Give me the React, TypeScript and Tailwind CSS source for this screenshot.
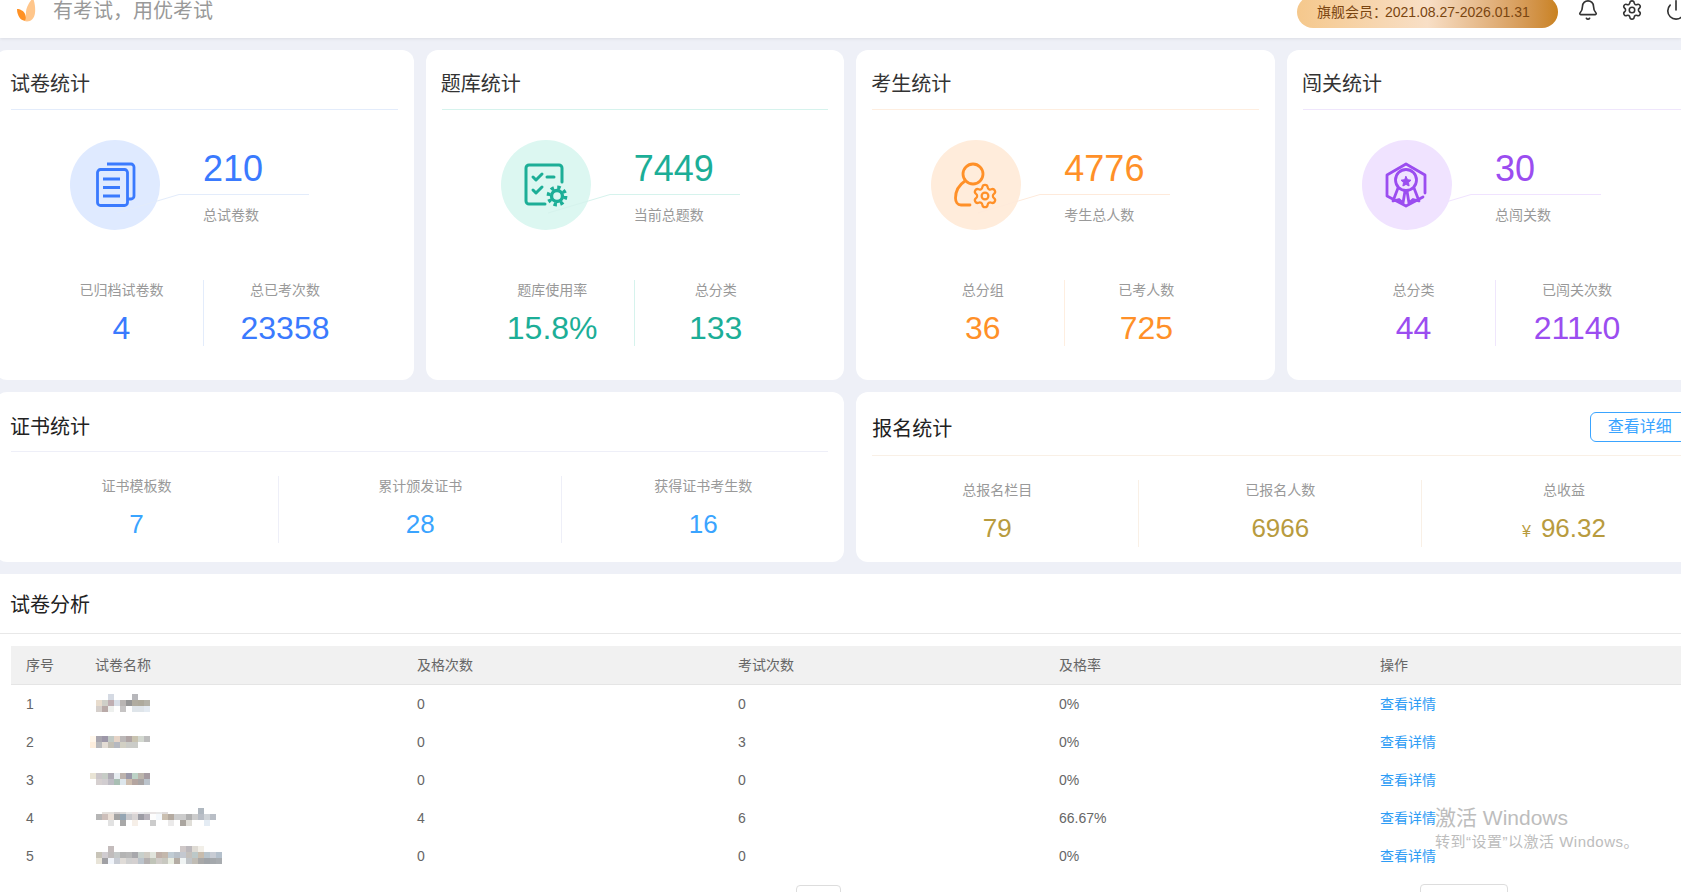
import { ReactNode } from 'react';
import { Bell, Settings, Power } from 'lucide-react';

const font = "font-['Liberation_Sans','Noto_Sans_CJK_SC',sans-serif]";

function DocIcon() {
  return (
    <svg width="90" height="90" viewBox="0 0 90 90" fill="none" stroke="#3a7afe" strokeWidth="2.8" strokeLinejoin="round">
      <path d="M37 24H61a3 3 0 0 1 3 3V56a3 3 0 0 1-3 3H58" />
      <rect x="27.5" y="29.5" width="30" height="36" rx="3" />
      <path d="M33 39H50M33 47.5H50M33 56H50" />
    </svg>
  );
}

function CheckGearIcon() {
  return (
    <svg width="90" height="90" viewBox="0 0 90 90" fill="none" stroke="#1cae97" strokeWidth="3" strokeLinecap="round" strokeLinejoin="round">
      <path d="M44 64H28a3 3 0 0 1-3-3V28a3 3 0 0 1 3-3H58a3 3 0 0 1 3 3V42" />
      <path d="M32 37l3 3 6-6M32 50l3 3 6-6M46 37H53" />
      <circle cx="56" cy="56" r="5.5" strokeWidth="3.4" />
      <circle cx="56" cy="56" r="8.6" strokeWidth="3.6" strokeLinecap="butt" strokeDasharray="3.4 3.35" />
    </svg>
  );
}

function PersonGearIcon() {
  return (
    <svg width="90" height="90" viewBox="0 0 90 90" fill="none" stroke="#ff9028" strokeWidth="2.8" strokeLinecap="round" strokeLinejoin="round">
      <circle cx="42" cy="34" r="10" />
      <path d="M34 41C28 45 24.500 51 24.500 58C24.500 62 26.500 65 30 65H39" />
      <Settings x="40.500" y="42.500" width="27" height="27" strokeWidth="2" color="#ff9028" />
    </svg>
  );
}

function MedalIcon() {
  return (
    <svg width="90" height="90" viewBox="0 0 90 90" fill="none" stroke="#9b4df0" strokeWidth="2.8" strokeLinecap="round" strokeLinejoin="round">
      <path d="M63 53V35L44 24L25 35V56L44 66L61 57" />
      <circle cx="44" cy="40" r="10.500" />
      <path d="M36 48L31 61L37 59.500L41 63L43 51M52 48L57 61L51 59.500L47 63L45 51" />
      <path d="M44 36.500l1.600 3.200 3.400.500-2.500 2.400.600 3.400-3.100-1.600-3.100 1.600.600-3.400-2.500-2.400 3.400-.500z" fill="#9b4df0" strokeWidth="1" />
    </svg>
  );
}

function Logo() {
  return (
    <svg width="22" height="22" viewBox="0 0 22 22">
      <path d="M18 -2C20 3 20.500 9 20 13C19.500 18 16 21.500 12 21.500C10 21.500 8 20.500 7 19C10 19 11 16 11 12C11 8 14 2 18 -2Z" fill="#ffc68b" />
      <path d="M2 9C5 9 9 11 10 14C11 17 11 19 10 20.500C6 21 2 16 2 9Z" fill="#ff9124" />
    </svg>
  );
}

interface StatCardProps {
  title: string;
  icon: ReactNode;
  total: string;
  totalLabel: string;
  left: [string, string];
  right: [string, string];
  textClass: string;
  circleClass: string;
  lineClass: string;
  lineColor: string;
}

function StatCard({ title, icon, total, totalLabel, left, right, textClass, circleClass, lineClass, lineColor }: StatCardProps) {
  return (
    <div className="h-[330px] rounded-xl bg-white px-4">
      <div className={`h-[60px] border-b pt-[21px] text-xl leading-[26px] text-[#333] ${lineClass}`}>
        <div className="-ml-px">{title}</div>
      </div>
      <div className="relative mt-[30px] ml-[59px] flex h-[90px]">
        <div className={`flex size-[90px] items-center justify-center rounded-full ${circleClass}`}>{icon}</div>
        <div className="ml-[43px] flex flex-col gap-[18px] pt-[11px]">
          <div className={`text-4xl leading-[36px] ${textClass}`}>{total}</div>
          <div className="text-sm leading-5 text-[#999]">{totalLabel}</div>
        </div>
        <svg className="absolute top-0 left-0" width="240" height="90" fill="none" stroke={lineColor}>
          <path d="M47 73L109 54.500H239" />
        </svg>
      </div>
      <div className="mt-[50px] ml-[29px] grid w-[326px] grid-cols-2 text-center">
        <div>
          <div className="text-sm leading-5 text-[#999]">{left[0]}</div>
          <div className={`mt-[10px] text-[32px] leading-9 ${textClass}`}>{left[1]}</div>
        </div>
        <div className={`border-l ${lineClass}`}>
          <div className="text-sm leading-5 text-[#999]">{right[0]}</div>
          <div className={`mt-[10px] text-[32px] leading-9 ${textClass}`}>{right[1]}</div>
        </div>
      </div>
    </div>
  );
}

const certStats = [
  ['证书模板数', '7'],
  ['累计颁发证书', '28'],
  ['获得证书考生数', '16'],
];

const signupStats = [
  ['总报名栏目', '79'],
  ['已报名人数', '6966'],
  ['总收益', '96.32'],
];

function StatColumns({ stats, textClass, lineClass, colsClass }: { stats: string[][]; textClass: string; lineClass: string; colsClass: string }) {
  return (
    <div className={`-mx-4 mt-6 grid text-center ${colsClass}`}>
      {stats.map(([label, value], idx) => (
        <div key={label} className={`h-[67px] ${idx > 0 ? `border-l ${lineClass}` : ''}`}>
          <div className="text-sm leading-5 text-[#999]">{label}</div>
          <div className={`mt-[10px] text-[26px] leading-9 ${textClass}`}>
            {label === '总收益' && <span className="mr-2.5 text-base">¥</span>}
            {value}
          </div>
        </div>
      ))}
    </div>
  );
}

// blurred exam names in the picture: [x, y, colours per 6px cell]
const mosaics: [number, number, string[]][][] = [
  [
    [42, 0, ['#b7b7bb']],
    [18, 0, ['#d5dae3']],
    [6, 6, ['#e8dccd', '#cfcfc8', '#bfaeb2', '#d9dfe8', '#b9b5b3', '#969696', '#b0aca0', '#aeaa9c', '#b4b2a8']],
    [6, 12, ['#d5cfcb', '#b9aaa8', '#eef0ee', '#ffffff', '#c6c4c4', '#ffffff', '#dfe5ea', '#dfe5ea', '#e4ebf2']],
  ],
  [
    [0, 4, ['#fff7ec', '#a8a5ae', '#9d97a8', '#c1c9c5', '#e6d4c7', '#bcb8b8', '#b0a4a4', '#c9c3b0', '#d3d8d0', '#bdbdbd']],
    [0, 10, ['#fdeedd', '#b9b9bb', '#e3dcd4', '#c3bfb4', '#b5b8c0', '#d2d0c4', '#cbccc8', '#cbccc8']],
  ],
  [
    [0, 3, ['#e9e4d5', '#cbc6c9', '#c6ccc6', '#aeaab4', '#e6ecf0', '#bdb3ad', '#9a98a8', '#bcd2c6', '#bcb5ac', '#a69ca2']],
    [0, 9, ['#ffffff', '#d6d0d0', '#d1cdd0', '#bebcc4', '#a9bfb4', '#dde6ec', '#cdbdae', '#b4a5a0', '#a8a4a4', '#bcc4cc']],
  ],
  [
    [108, 0, ['#b0b8c0']],
    [12, 4, ['#e4e0dc', '#e4e0dc', '#d4d0d0', '#d8d8d8', '#e8e8e8', '#ece4e4', '#e8e8ec', '#e4e4e4', '#e8e4e4', '#e8e8e8', '#e0dcdc']],
    [6, 6, ['#b6b6b6', '#cdbfba', '#eadfd6', '#a3a3a3', '#94a5b3', '#c8c8cc', '#d8d4d4', '#9c9ca4', '#b8b4bc', '#fdfdfd', '#f4f8fc', '#cabfb0', '#b4aaa0', '#cccccc', '#cccccc', '#b0b0b0', '#cccccc', '#b9bec6', '#d0d4d8', '#b9bec6']],
    [6, 12, ['#ffffff', '#ffffff', '#e2e2e2', '#ffffff', '#a8a8a8', '#ffffff', '#f6efe8', '#ffffff', '#ffffff', '#cccccc', '#ffffff', '#ffffff', '#ebeaea', '#ffffff', '#aaa59f', '#e0ded8', '#ffffff', '#ffffff', '#e4ecf4', '#ffffff']],
  ],
  [
    [18, 0, ['#c4bcbc']],
    [90, 0, ['#cfc8c8', '#bcb8bc', '#dfdbd4', '#f2efe8']],
    [6, 6, ['#c8c4b8', '#d0ccd0', '#c0bcbc', '#c4c8c8', '#b4b4b4', '#b8b8b8', '#a8a8ac', '#c8d0cc', '#d0ccc4', '#e0e4dc', '#c0b0a8', '#c4b8ac', '#c0ccd4', '#b8c0c8', '#c4c8d0', '#c4c0bc', '#bcc8c8', '#c8bcac', '#b8c4cc', '#c8ccd4', '#b4c0cc']],
    [6, 12, ['#e8e4d8', '#a0a0a4', '#f0f4fa', '#c8ccd4', '#e0dcd8', '#d0d0d0', '#d4d0d0', '#bcc4cc', '#b4b0b0', '#c0c4b8', '#d0ccc8', '#c8c8c0', '#e8ece0', '#b4aca4', '#f0f4f4', '#c0c4c8', '#c0bcb4', '#a8a8a8', '#a0a4a8', '#a4a8ac', '#a8acb0']],
  ],
];

function Mosaic({ rows }: { rows: [number, number, string[]][] }) {
  return (
    <svg className="-ml-[5px] overflow-visible" width="132" height="20" shapeRendering="crispEdges">
      {rows.map(([x, y, cells]) =>
        cells.map((c, i) => <rect key={`${x}-${y}-${i}`} x={x + i * 6} y={y} width="6" height="6" fill={c} />)
      )}
    </svg>
  );
}

const tableRows = [
  ['1', '0', '0', '0%'],
  ['2', '0', '3', '0%'],
  ['3', '0', '0', '0%'],
  ['4', '4', '6', '66.67%'],
  ['5', '0', '0', '0%'],
];

const gridCols = 'grid grid-cols-[69px_322px_repeat(4,321px)] items-center';

export default function App() {
  return (
    <div className={`relative h-[892px] w-[1681px] overflow-hidden bg-[#eef0f7] ${font}`}>
      <header className="flex h-[38px] items-start bg-white shadow-[0_1px_3px_rgba(0,0,0,0.08)]">
        <div className="ml-[15px] w-[22px]">
          <Logo />
        </div>
        <div className="ml-4 text-xl leading-[22px] text-[#999]">有考试，用优考试</div>
        <div className="ml-auto flex items-start">
          <div className="-mt-1 flex h-8 w-[261px] items-center rounded-full bg-linear-to-r from-[#f5c88c] via-[#f8dfc6] to-[#c9821f] pl-5 text-sm text-[#7a4510]">
            旗舰会员：<span className="-ml-0.5">2021.08.27-2026.01.31</span>
          </div>
          <Bell className="ml-[19px] -mt-px text-[#333]" size={22} strokeWidth={1.8} />
          <Settings className="ml-[22px] -mt-px text-[#333]" size={22} strokeWidth={1.7} />
          <div className="ml-[22px] -mt-px w-[16px]">
            <Power size={22} strokeWidth={1.8} className="text-[#333]" />
          </div>
        </div>
      </header>

      <main className="-ml-[5px] flex w-[1710.67px] flex-col gap-3 pt-3">
        <div className="grid grid-cols-4 gap-3">
          <StatCard title="试卷统计" icon={<DocIcon />} total="210" totalLabel="总试卷数" left={['已归档试卷数', '4']} right={['总已考次数', '23358']} textClass="text-[#3a7afe]" circleClass="bg-[#dfeaff]" lineClass="border-[#e3ecfb]" lineColor="#e3ecfb" />
          <StatCard title="题库统计" icon={<CheckGearIcon />} total="7449" totalLabel="当前总题数" left={['题库使用率', '15.8%']} right={['总分类', '133']} textClass="text-[#1cae97]" circleClass="bg-[#dcf7f1]" lineClass="border-[#d6f3ed]" lineColor="#d6f3ed" />
          <StatCard title="考生统计" icon={<PersonGearIcon />} total="4776" totalLabel="考生总人数" left={['总分组', '36']} right={['已考人数', '725']} textClass="text-[#ff9028]" circleClass="bg-[#ffecdb]" lineClass="border-[#feeee0]" lineColor="#feeadb" />
          <StatCard title="闯关统计" icon={<MedalIcon />} total="30" totalLabel="总闯关数" left={['总分类', '44']} right={['已闯关次数', '21140']} textClass="text-[#9b4df0]" circleClass="bg-[#f0e3ff]" lineClass="border-[#efe6fc]" lineColor="#f0e3ff" />
        </div>

        <div className="grid grid-cols-2 gap-3">
          <div className="h-[170px] rounded-xl bg-white px-4">
            <div className="h-[60px] border-b border-[#eeeff8] pt-[22px] text-xl leading-[26px] text-[#222]">
              <div className="-ml-px">证书统计</div>
            </div>
            <StatColumns stats={certStats} textClass="text-[#3aa4ff]" lineClass="border-[#eeeff8]" colsClass="grid-cols-3" />
          </div>
          <div className="h-[170px] rounded-xl bg-white px-4">
            <div className="flex h-[64px] items-start justify-between border-b border-[#f9f0e6] pt-5">
              <div className="mt-0.5 text-xl leading-[30px] text-[#222]">报名统计</div>
              <div className="flex h-[30px] w-[100px] items-center justify-center rounded-md border border-[#3aa4ff] text-base text-[#3aa4ff]">查看详细</div>
            </div>
            <StatColumns stats={signupStats} textClass="text-[#b89b3e]" lineClass="border-[#f9f0e6]" colsClass="grid-cols-[282px_283px_1fr]" />
          </div>
        </div>

        <section className="bg-white">
          <div className="h-[60px] border-b border-[#e8e8e8] pt-[18px] pl-[15px] text-xl leading-[26px] text-[#222]">试卷分析</div>
          <div className="mt-3 pl-4">
            <div className={`${gridCols} h-[39px] border-b border-[#e5e5e5] bg-[#f1f1f1] text-sm text-[#666]`}>
              {['序号', '试卷名称', '及格次数', '考试次数', '及格率', '操作'].map((h) => (
                <div key={h} className="pl-[15px]">{h}</div>
              ))}
            </div>
            {tableRows.map(([no, passed, taken, rate], idx) => (
              <div key={no} className={`${gridCols} h-[38px] text-sm text-[#666]`}>
                <div className="pl-[15px]">{no}</div>
                <div className="pl-[15px]">
                  <Mosaic rows={mosaics[idx]} />
                </div>
                <div className="pl-[15px]">{passed}</div>
                <div className="pl-[15px]">{taken}</div>
                <div className="pl-[15px]">{rate}</div>
                <div className="pl-[15px] text-[#2d9cf5]">查看详情</div>
              </div>
            ))}
          </div>
          <div className="mt-[10px] flex h-10 items-start pl-[801px]">
            <div className="h-8 w-[45px] rounded border border-[#dddddd]" />
            <div className="ml-[579px] -mt-px h-8 w-[88px] rounded border border-[#dddddd]" />
          </div>
        </section>
      </main>

      <div className="absolute top-[805px] left-[1435px] text-[#bdbdbd]">
        <div className="text-[21px] leading-[26px]">激活 Windows</div>
        <div className="mt-px text-[15px] leading-5 tracking-[0.5px]">转到“设置”以激活 Windows。</div>
      </div>
    </div>
  );
}
